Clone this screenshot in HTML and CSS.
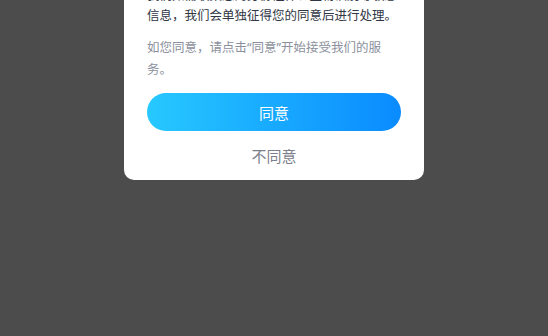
FILE: index.html
```html
<!DOCTYPE html>
<html lang="zh-CN">
<head>
<meta charset="utf-8">
<title>隐私政策</title>
<link rel="stylesheet" href="styles.css">
</head>
<body>
<div class="overlay">
  <div class="dialog">
    <p class="para main">我们如需收集您的身份证件、生物识别等敏感信息，我们会单独征得您的同意后进行处理。</p>
    <p class="para sub">如您同意，请点击“同意”开始接受我们的服务。</p>
    <button class="btn-agree" type="button">同意</button>
    <button class="btn-disagree" type="button">不同意</button>
  </div>
</div>
</body>
</html>
```

FILE: styles.css
```css
html, body {
  margin: 0;
  padding: 0;
  height: 100%;
  overflow: hidden;
}
body {
  background: #4c4c4c;
  font-family: "Noto Sans", "Noto Sans CJK SC", sans-serif;
}
.overlay {
  display: flex;
  justify-content: center;
  align-items: flex-end;
  height: 180px;
}
.dialog {
  width: 300px;
  box-sizing: border-box;
  background: #ffffff;
  border-radius: 10px;
  padding: 0 23px 5px;
  display: flex;
  flex-direction: column;
  flex-shrink: 0;
}
.para {
  margin: 0;
  font-size: 12.5px;
  line-height: 22px;
}
.main {
  color: #303644;
  line-height: 20px;
}
.sub {
  color: #8b909c;
  margin-top: 11px;
}
.btn-agree {
  margin-top: 12px;
  height: 38px;
  border: none;
  border-radius: 19px;
  background: linear-gradient(90deg, #27c8ff 0%, #0a8bff 100%);
  color: #ffffff;
  font-family: "Noto Sans CJK SC", sans-serif;
  font-size: 15px;
  padding: 0;
}
.btn-disagree {
  margin-top: 4px;
  height: 40px;
  border: none;
  background: transparent;
  color: #7c808b;
  font-family: "Noto Sans CJK SC", sans-serif;
  font-size: 15px;
  padding: 0;
}
```
